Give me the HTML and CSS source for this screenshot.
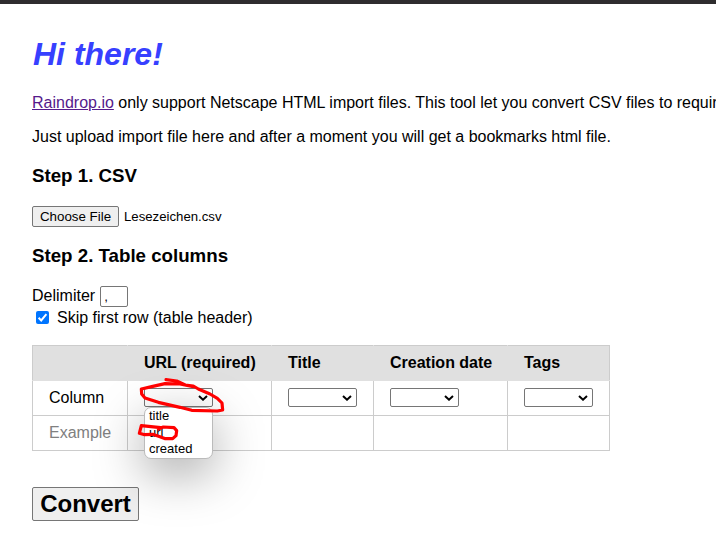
FILE: index.html
```html
<!DOCTYPE html>
<html lang="en">
<head>
<meta charset="utf-8">
<title>CSV to bookmarks</title>
<link rel="stylesheet" href="styles.css">
</head>
<body>
<main class="page">
  <h1>Hi there!</h1>
  <p class="intro"><a href="#">Raindrop.io</a> only support Netscape HTML import files. This tool let you convert CSV files to required</p>
  <p>Just upload import file here and after a moment you will get a bookmarks html file.</p>

  <h3 class="first">Step 1. CSV</h3>
  <div class="file"><button type="button">Choose File</button><span>Lesezeichen.csv</span></div>

  <h3 class="second">Step 2. Table columns</h3>
  <label class="delimiter">Delimiter <input type="text" value=","></label>
  <label class="skip">
    <svg class="check" viewBox="0 0 13 13"><rect width="13" height="13" rx="2" fill="#0075ff"/><path d="M2.6 6.8 5.2 9.4 10.4 3.2" fill="none" stroke="#fff" stroke-width="2"/></svg>
    <span>Skip first row (table header)</span>
  </label>

  <table>
    <colgroup><col class="c-label"><col class="c-url"><col class="c-title"><col class="c-date"><col class="c-tags"></colgroup>
    <thead>
      <tr><th></th><th>URL (required)</th><th>Title</th><th>Creation date</th><th>Tags</th></tr>
    </thead>
    <tbody>
      <tr>
        <td>Column</td>
        <td>
          <div class="select open"><svg viewBox="0 0 10 6"><path d="M1 1 5 4.7 9 1"/></svg>
            <ul class="menu"><li>title</li><li>url</li><li>created</li></ul>
            <svg class="marks" viewBox="0 0 300 285">
              <path d="M108 29 140 33 166 45 190 48 205 57 240 72 262 85 276 99 278 120 262 123 185 121 150 112 85 97 45 84 35 72 34 57 65 50 105 41 150 42 190 50"/>
              <path d="M92 173 34 167 28 190 44 194 68 193 90 200 106 206 128 206 138 197 140 182 132 173 100 171 85 177"/>
            </svg>
          </div>
        </td>
        <td><div class="select"><svg viewBox="0 0 10 6"><path d="M1 1 5 4.7 9 1"/></svg></div></td>
        <td><div class="select"><svg viewBox="0 0 10 6"><path d="M1 1 5 4.7 9 1"/></svg></div></td>
        <td><div class="select"><svg viewBox="0 0 10 6"><path d="M1 1 5 4.7 9 1"/></svg></div></td>
      </tr>
      <tr class="example"><td>Example</td><td></td><td></td><td></td><td></td></tr>
    </tbody>
  </table>

  <button class="convert" type="button">Convert</button>
</main>
</body>
</html>
```
FILE: styles.css
```css
* { box-sizing: border-box; }
body {
  margin: 0;
  height: 548px;
  overflow: hidden;
  border-top: 4px solid #2e2c2e;
  background: #fff;
  color: #000;
  font: 16px/18px "Liberation Sans", Arial, sans-serif;
}
.page { padding: 31px 0 0 32px; }
h1 { margin: 0 0 21px; padding-left: 1px; color: #3740ff; font-size: 32px; line-height: 38px; font-style: italic; }
p { margin: 0 0 16px; white-space: nowrap; }
.intro { overflow: hidden; }
a { color: #551a8b; }
h3 { margin: 0; font-size: 18.72px; line-height: 22px; }
.first { margin: 19px 0; }
.file { display: flex; align-items: center; gap: 5px; height: 21px; font-size: 13.2px; }
.file button { width: 87px; height: 21px; padding: 0; font: 13.333px "Liberation Sans", Arial, sans-serif; }
button { border: 1px solid #767676; border-radius: 2px; background: #efefef; color: #000; }
.second { margin: 18px 0 19px; }
.delimiter { display: flex; gap: 5px; height: 21px; line-height: 20px; }
.delimiter input {
  width: 28px; height: 21px; padding: 1px 3px;
  border: 1px solid #767676; border-radius: 2px;
  font: 13.333px "Liberation Sans", Arial, sans-serif;
}
.skip { display: flex; align-items: center; gap: 8px; height: 22px; padding-left: 4px; }
.check { width: 13px; height: 13px; margin-top: -2px; }
table { width: 578px; margin: 16px 0 36px; border-collapse: collapse; table-layout: fixed; }
.c-label { width: 95px; }
.c-url { width: 144px; }
.c-title { width: 102px; }
.c-date { width: 134px; }
.c-tags { width: 102px; }
th, td { height: 35px; padding: 0 16px; border: 1px solid #ccc; text-align: left; }
th { padding-bottom: 1px; border-color: #ccc #e0e0e0 #e0e0e0; background: #e0e0e0; white-space: nowrap; }
th:first-child { border-left-color: #ccc; }
th:last-child { border-right-color: #ccc; }
td { padding-bottom: 1px; }
.example { color: #808080; }
.select {
  position: relative;
  display: flex; align-items: center; justify-content: flex-end;
  width: 69px; height: 19px; padding-right: 4px;
  border: 1px solid #767676; border-radius: 2px; background: #fff;
}
.select > svg:first-child { width: 10px; height: 6px; }
.select path { fill: none; stroke: #000; stroke-width: 2; }
.menu {
  position: absolute; z-index: 1; top: 18px; left: -1px;
  width: 69px; height: 52px; margin: 0; padding: 0 4px;
  border: 1px solid #bbb; border-radius: 7px; background: #fff;
  box-shadow: 0 14px 50px rgba(0, 0, 0, .36);
  list-style: none; font-size: 13px; line-height: 16.5px;
}
.marks { position: absolute; z-index: 2; left: -15px; top: -19px; width: 100px; height: 95px; overflow: visible; }
.marks path { stroke: #f00; stroke-width: 9.5; stroke-linecap: round; stroke-linejoin: round; }
.convert { display: block; width: 107px; height: 34px; padding: 0; font: bold 24px/28px "Liberation Sans", Arial, sans-serif; }
```
